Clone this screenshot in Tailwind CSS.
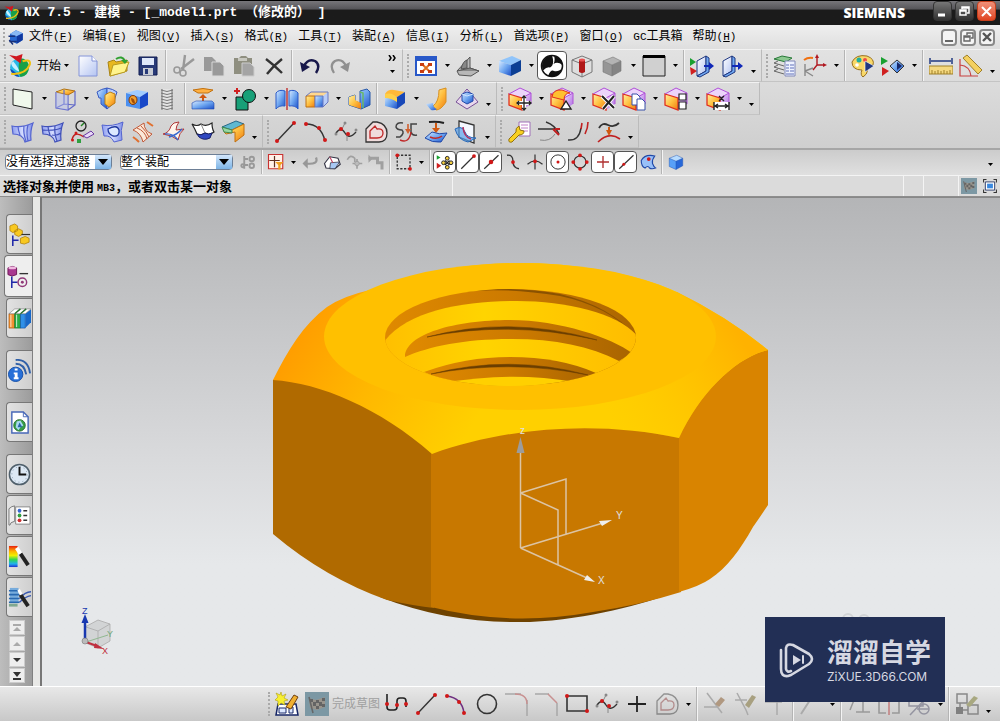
<!DOCTYPE html>
<html lang="zh-CN">
<head>
  <meta charset="UTF-8" />
  <meta name="viewport" content="width=device-width, initial-scale=1.0"/>
  <title>NX 7.5 - 建模</title>
  <script src="https://cdn.jsdelivr.net/npm/@tailwindcss/browser@4"></script>
</head>
<body class="h-screen flex flex-col overflow-hidden bg-[#dcdcdc] text-black text-xs font-['Liberation_Sans','Noto_Sans_CJK_SC',sans-serif]">

  <!-- shared gradients -->
  <svg width="0" height="0" class="absolute" aria-hidden="true">
    <defs>
      <linearGradient id="gb" x1="0" y1="0" x2="1" y2="1"><stop offset="0" stop-color="#d8eaff"/><stop offset=".5" stop-color="#6ea6f0"/><stop offset="1" stop-color="#1c50c8"/></linearGradient>
      <linearGradient id="gl" x1="0" y1="0" x2="1" y2="1"><stop offset="0" stop-color="#fff"/><stop offset="1" stop-color="#b4c4f2"/></linearGradient>
      <linearGradient id="gs" x1="0" y1="0" x2="1" y2="0"><stop offset="0" stop-color="#8c9cf0"/><stop offset=".5" stop-color="#d4dcff"/><stop offset="1" stop-color="#7c8ce8"/></linearGradient>
      <linearGradient id="go" x1="0" y1="0" x2="1" y2="1"><stop offset="0" stop-color="#fff0a0"/><stop offset=".5" stop-color="#ffc040"/><stop offset="1" stop-color="#ee7a10"/></linearGradient>
      <linearGradient id="gp" x1="0" y1="0" x2="1" y2="1"><stop offset="0" stop-color="#f4dcff"/><stop offset="1" stop-color="#a868e0"/></linearGradient>
      <linearGradient id="gr" x1="0" y1="0" x2="0" y2="1"><stop offset="0" stop-color="#e82010"/><stop offset=".25" stop-color="#ffb000"/><stop offset=".45" stop-color="#f0f000"/><stop offset=".65" stop-color="#30d850"/><stop offset=".85" stop-color="#20b0f0"/><stop offset="1" stop-color="#2030d0"/></linearGradient>
    </defs>
  </svg>

  <header class="h-[25px] shrink-0 flex items-center pl-1 pr-1 border-t border-black bg-linear-to-b from-[#77767a] from-0% via-[#555458] via-35% to-[#1b1b1b] to-36% text-white">
    <span data-icon="nx" data-size="16"></span>
    <h1 class="ml-1 text-[13px] font-bold whitespace-pre font-['Liberation_Mono','Noto_Sans_CJK_SC',monospace]">NX 7.5 - 建模 - [_model1.prt （修改的） ]</h1>
    <span class="ml-auto mr-7 text-sm font-extrabold font-['Open_Sans',sans-serif]">SIEMENS</span>
    <div class="flex gap-[3px] self-start">
      <button aria-label="最小化" class="w-[19px] h-5 rounded-sm border border-[#333] bg-linear-to-b from-[#777] to-[#333] flex items-center justify-center"><svg width="13" height="13" viewBox="0 0 13 13"><path d="M2 10h7" stroke="#fff" stroke-width="3"/></svg></button>
      <button aria-label="还原" class="w-[19px] h-5 rounded-sm border border-[#333] bg-linear-to-b from-[#777] to-[#333] flex items-center justify-center"><svg width="13" height="13" viewBox="0 0 13 13" fill="none" stroke="#fff" stroke-width="1.5"><path d="M4 4V2h7v6H9M2 5h6v5H2zM2 6h6M4 3h7"/></svg></button>
      <button aria-label="关闭" class="w-[19px] h-5 rounded-sm border border-[#c8401c] bg-linear-to-b from-[#f09078] to-[#e04420] flex items-center justify-center"><svg width="13" height="13" viewBox="0 0 13 13"><path d="m2 2 9 9M11 2l-9 9" stroke="#fff" stroke-width="2"/></svg></button>
    </div>
  </header>

  <nav class="h-6 shrink-0 flex items-center pl-[3px] pr-[5px] bg-linear-to-b from-[#efefef] to-[#dedede]">
    <span class="w-1 h-[18px] border-l-2 border-dotted border-[#aaa]"></span>
    <span data-icon="menuCube" data-size="18"></span>
    <div id="menu" class="ml-1 flex gap-[10px]"></div>
    <div class="ml-auto flex gap-[3px]">
      <button aria-label="最小化文档" class="w-4 h-[17px] rounded-sm border-2 border-[#8a8a8a] bg-[#f4f4f4] flex items-end justify-center pb-[2px]"><span class="w-2 h-[2px] bg-[#666]"></span></button>
      <button aria-label="还原文档" class="w-4 h-[17px] rounded-sm border-2 border-[#8a8a8a] bg-[#f4f4f4] flex items-center justify-center"><svg width="11" height="11" viewBox="0 0 11 11" fill="none" stroke="#666" stroke-width="1.4"><path d="M4 3V1h6v5H8M1 4h6v5H1zM1 5h6"/></svg></button>
      <button aria-label="关闭文档" class="w-4 h-[17px] rounded-sm border-2 border-[#8a8a8a] bg-[#f4f4f4] flex items-center justify-center"><svg width="10" height="10" viewBox="0 0 10 10"><path d="m1 1 8 8M9 1 1 9" stroke="#555" stroke-width="2.4"/></svg></button>
    </div>
  </nav>

  <div class="shrink-0 bg-linear-to-b from-[#e2e2e2] to-[#cfcfcf] border-b-2 border-[#a6a6a6]">
    <div id="row1" class="h-[33px] flex"></div>
    <div id="row2" class="h-[33px] flex"></div>
    <div id="row3" class="h-[33px] flex"></div>
  </div>

  <div class="h-[26px] shrink-0 flex items-center pl-[5px] pr-1 pb-px bg-linear-to-b from-[#cccccc] to-[#e0e0e0] border-b border-[#f4f4f4]">
    <label class="relative w-[107px]">
      <select aria-label="选择过滤器" class="block w-full h-4 appearance-none rounded-sm border border-[#6d7f96] bg-white text-xs leading-[14px] outline-none"><option>没有选择过滤器</option></select>
      <span class="absolute right-px top-px w-4 h-[14px] bg-linear-to-b from-[#d2e6fb] to-[#7cb4e6] flex items-center justify-center pointer-events-none"><svg width="10" height="6"><path d="M0 0h10L5 6z"/></svg></span>
    </label>
    <label class="relative w-[113px] ml-2">
      <select aria-label="选择范围" class="block w-full h-4 appearance-none rounded-sm border border-[#6d7f96] bg-white text-xs leading-[14px] outline-none"><option>整个装配</option></select>
      <span class="absolute right-px top-px w-4 h-[14px] bg-linear-to-b from-[#d2e6fb] to-[#7cb4e6] flex items-center justify-center pointer-events-none"><svg width="10" height="6"><path d="M0 0h10L5 6z"/></svg></span>
    </label>
    <div id="row4" class="ml-1 h-6 flex flex-1"></div>
  </div>

  <div class="h-[21px] shrink-0 flex items-center border-b border-[#8e8e8e] bg-[#dbdbdb]">
    <p class="w-[452px] pl-[3px] text-[13px] leading-none font-bold whitespace-pre font-['Noto_Sans_CJK_SC',sans-serif]">选择对象并使用 <span class="text-[10px] font-['Liberation_Mono',monospace]">MB3</span>，或者双击某一对象</p>
    <span class="flex-1 h-full border-x border-[#f4f4f4]"></span>
    <span class="w-5 h-full border-r border-[#f4f4f4]"></span>
    <span class="w-[35px] h-full border-r border-[#f4f4f4]"></span>
    <span class="w-5 flex justify-center" data-icon="flag" data-size="16"></span>
    <span class="w-[21px] flex justify-center" data-icon="fullscreen" data-size="14"></span>
  </div>

  <main class="flex-1 min-h-0 flex">
    <aside class="w-8 shrink-0 flex flex-col items-end pt-[17px] bg-linear-to-r from-[#bdbdbd] to-[#9c9c9c]">
      <div id="tabs" class="w-full flex flex-col items-end"></div>
      <div id="scrollers" class="mt-[2px] mr-[7px] flex flex-col"></div>
    </aside>
    <div class="w-[10px] shrink-0 border-l border-r-2 border-l-[#808080] border-r-[#777] bg-[#e8e8e6]"></div>
    <section class="relative flex-1 min-w-0 border-t border-[#888] bg-linear-to-b from-[#b4b5b7] from-0% via-[#d8d9db] via-52% to-[#e6e8ea] to-75%">
      <svg class="block w-full h-full" viewBox="42 198 958 488">
        <defs>
          <linearGradient id="chamfer" gradientUnits="userSpaceOnUse" x1="285" y1="320" x2="470" y2="430"><stop offset="0" stop-color="#ff9800"/><stop offset=".5" stop-color="#ffb800"/><stop offset="1" stop-color="#ffd000"/></linearGradient>
          <linearGradient id="chamferR" gradientUnits="userSpaceOnUse" x1="600" y1="400" x2="730" y2="320"><stop offset="0" stop-color="#ffc400" stop-opacity="0"/><stop offset="1" stop-color="#ffb200"/></linearGradient>
          <linearGradient id="wall" x1="0" y1="0" x2="1" y2="0"><stop offset="0" stop-color="#e08a00"/><stop offset=".5" stop-color="#cc7a00"/><stop offset="1" stop-color="#a86400"/></linearGradient>
          <linearGradient id="lit" x1="0" y1="0" x2="1" y2="0"><stop offset="0" stop-color="#ffbe00"/><stop offset=".4" stop-color="#ffd400"/><stop offset="1" stop-color="#ffbc00"/></linearGradient>
          <clipPath id="hole"><ellipse cx="510.500" cy="337.500" rx="125.500" ry="48.500"/></clipPath>
        </defs>
        <!-- underside and side faces -->
        <path d="M380 597C430 617 480 623 530 622C590 619 640 605 682 590L660 570H400z" fill="#6e4200"/>
        <path d="M273 380C340 370 440 420 434 454V608Q415 606 387 600Q325 578 273 534z" fill="#b06a00"/>
        <path d="M431 450L560 410L681 437V592Q640 605 593 612Q510 627 431 607z" fill="#c87800"/>
        <path d="M679 436L700 380L740 345L768 350V505Q760 517 753 527C740 550 727 568 710 579Q700 586 679 592z" fill="#d98400"/>
        <!-- chamfer -->
        <path d="M273 380C288 350 303 325 327 307Q343 296 370 290C415 274 465 263 520 263C575 263 635 273 677 292Q728 317 768 350C735 358 700 393 679 438C600 421 510 426 432 454C380 408 320 383 273 380z" fill="url(#chamfer)"/>
        <path d="M540 410L660 290L677 292Q728 317 768 350C735 358 700 393 679 438Q610 423 540 429z" fill="url(#chamferR)"/>
        <ellipse cx="520" cy="336.500" rx="196" ry="73.500" fill="#ffc000"/>
        <!-- threaded hole -->
        <g clip-path="url(#hole)">
          <rect x="380" y="285" width="262" height="105" fill="url(#wall)"/>
          <path d="M460 292Q510 285 560 294Q610 306 636 336Q608 306 560 296Q505 287 460 292z" fill="#8a5200"/>
          <path d="M380 348C400 312 460 301 517 301C570 301 625 315 640 340V395H380z" fill="url(#lit)"/>
          <path d="M405 357C405 334 455 320 510 320C560 320 612 338 632 353L619 361C590 346 555 339 512 339C465 339 430 346 405 357z" fill="url(#wall)"/>
          <path d="M427 337Q510 315 597 340Q510 320 427 337z" fill="#6b3f00" stroke="#6b3f00" stroke-width=".5"/>
          <path d="M424 372Q465 357 510 357Q560 357 596 373L568 384H453z" fill="url(#wall)"/>
          <path d="M431 374Q510 354 588 375Q510 359 431 374z" fill="#6b3f00" stroke="#6b3f00" stroke-width=".5"/>
          <path d="M445 383Q510 371 575 382V392H445z" fill="#ffd000"/>
        </g>
        <!-- datum csys -->
        <g fill="none" stroke="#dcc4a4" stroke-width="1.500">
          <path d="M520.500 548V450M520.500 548L603 523M520.500 548L587 578M520.500 493L566 479V535M520.500 493L558 510V565"/>
        </g>
        <path d="M520.500 437l4 16h-8z" fill="#9c9c9c"/>
        <path d="M612 520l-13 1 3 5z M595 582l-8-7-3 5z" fill="#eee"/>
        <g fill="#e0e0e0" font-family="Liberation Sans" font-size="10"><text x="520" y="434">z</text><text x="616" y="519">Y</text><text x="598" y="584">X</text></g>
        <!-- view triad -->
        <path d="M85 627L98 620L110 624V641L98 648L86 643zM86 627L98 631V648M98 631L110 624" fill="#c4c6c6" fill-opacity=".6" stroke="#aaa" stroke-width=".8"/>
        <path d="M85 642V622" stroke="#1838b0" stroke-width="2.500"/><path d="M85 614l3.500 9h-7z" fill="#1838b0"/>
        <path d="M86 642L108 635" stroke="#90b890"/><path d="M86 642L97 646" stroke="#c03040" stroke-width="2"/><path d="M104 649l-9-6-1 5z" fill="#c03040"/>
        <circle cx="85" cy="641" r="3" fill="#bbb" stroke="#777" stroke-width=".6"/>
        <g font-family="Liberation Sans" font-size="9"><text x="82" y="614" fill="#1838b0">Z</text><text x="107" y="637" fill="#70a878">Y</text><text x="102" y="654" fill="#c03040">X</text></g>
        <g fill="none" stroke="#d2d4d6" stroke-width="2"><circle cx="848" cy="619" r="5"/><circle cx="864" cy="620" r="5"/></g>
      </svg>
      <div class="absolute right-[55px] -bottom-4 w-[180px] h-[85px] bg-[#222f55] text-[#d6d8e2] flex items-center gap-3 pl-[14px]">
        <svg width="36" height="38" viewBox="0 0 36 38" fill="none" stroke="currentColor" stroke-width="2.600" stroke-linecap="round" stroke-linejoin="round">
          <path d="M2 9v19q0 8 7 7l3-1M12 30q-4 2-5-2V7q1-5 7-3l16 9q6 5 0 10l-18 11"/><path d="m14 14 8 5-8 5z" fill="currentColor" stroke="none"/><path d="M24 15v7" stroke-width="2"/>
        </svg>
        <div class="flex flex-col gap-[6px]">
          <p class="text-[26px] leading-7 font-bold font-['Noto_Sans_CJK_SC',sans-serif]">溜溜自学</p>
          <p class="text-xs leading-3 font-['Inter',sans-serif]">ZiXUE.3D66.COM</p>
        </div>
      </div>
    </section>
  </main>

  <footer id="bottom" class="h-[35px] shrink-0 flex pl-[264px] border-t border-white bg-linear-to-b from-[#e8e8e8] to-[#c8c8c8]"></footer>

  <script>
    const cube = (top, left, right, line = '#1c50b0') =>
      `<path d="M3 7 13 3l8 4-9 4z" fill="${top}"/><path d="M3 7v11l9 4V11z" fill="${left}"/><path d="M12 11v11l9-5V7z" fill="${right}"/><path d="M3 7 13 3l8 4v10l-9 5-9-4zM3 7l9 4 9-4M12 11v11" fill="none" stroke="${line}" stroke-width=".6"/>`;
    const sync = `<path d="M1 7 12 1l11 5-9 5z" fill="#ecd4fa"/><path d="M14 11l9-5v11l-9 6z" fill="url(#gp)"/><path d="M1 7l13 4v12L1 18z" fill="url(#go)" stroke="#e03020" stroke-width="1.300"/><path d="M1 7 12 1l11 5v11M14 11l9-5" fill="none" stroke="#b050d8"/>`;
    const dot = (x, y, r = 2) => `<circle cx="${x}" cy="${y}" r="${r}" fill="#d01818"/>`;
    const line = (d, c = '#222', w = 1.5) => `<path d="${d}" fill="none" stroke="${c}" stroke-width="${w}"/>`;

    const icons = {
      nx: `<circle cx="11" cy="14" r="9" fill="#28b8e8"/><path d="M11 5q9 0 9 9 0 8-8 9-3-4-1-18z" fill="#18a048"/><path d="M2 15q6 3 9 8-7-1-9-8z" fill="#1048b8"/><path d="M5 8q5 6 6 10Q4 15 3 10z" fill="#c8f0ff"/>${line('M3 20q14 1 18-9c1-5-4-4-7-3', '#f0c010', 2)}<path d="M1 2l7 1 6-2-2 9z" fill="#d01820"/>`,
      menuCube: `<path d="M4 8 12 3l9 4v9l-8 5-9-4z" fill="#2868d0"/><path d="M4 8l9 3 8-4-9-4z" fill="#88b8f4"/><path d="M13 11v10l8-5V7z" fill="#1038a0"/><path d="M2 11h9M3 16l5 6M3 18h10" stroke="#183078" stroke-width="2"/>`,
      new: `<path d="M3 2h13l5 5v15H3z" fill="url(#gl)" stroke="#8494d8"/><path d="M16 2v5h5" fill="#fff" stroke="#8494d8"/>`,
      open: `<path d="M2 8l6-2 2 2 11-2v11L4 22z" fill="#e8b820" stroke="#a88418"/><path d="M4 22 7 11l16-3-4 10z" fill="#fff48c" stroke="#b89a20"/>${line('M10 5q6-4 9 2', '#30a030', 2)}<path d="M15 6h7l-3 4z" fill="#30a030"/>`,
      save: `<path d="M3 3h18v18H3z" fill="#283a78" stroke="#101c50"/><path d="M6 4h12v7H6z" fill="#dfe8fa"/><path d="M7 14h10v7H7z" fill="#c8ccd4"/><path d="M9 15h3v5H9z" fill="#283a78"/>`,
      cut: `${line('M22 5 9 15M13 1 11 16', '#999', 2.4)}<circle cx="5" cy="16" r="3" fill="none" stroke="#999" stroke-width="1.600"/><circle cx="11" cy="19" r="3" fill="none" stroke="#999" stroke-width="1.600"/>`,
      copy: `<path d="M2 3h8l4 4v10H2z" fill="#999"/><path d="M10 8h8l4 4v10H10z" fill="#999" stroke="#d8d8d8"/>`,
      paste: `<path d="M2 4h5l2-2h5l2 2h4v16H2z" fill="#8f8f80"/><path d="M6 4h9v3H6z" fill="#c8c8c0"/><path d="M10 9h8l4 4v9H10z" fill="#a4a4a4" stroke="#ccc"/>`,
      del: line('M4 5q8 6 16 14M20 5Q11 12 5 20', '#333', 2.4),
      undo: `${line('M6 12q4-8 11-5 6 4 1 12', '#18184a', 2.4)}<path d="M2 8l2 10 8-5z" fill="#18184a"/>`,
      redo: `${line('M18 12q-4-8-11-5-6 4-1 12', '#909090', 2.2)}<path d="M22 8l-2 10-8-5z" fill="#909090"/>`,
      fit: `<path d="M2 3h20v18H2z" fill="#fff" stroke="#2858c8" stroke-width="2"/><path d="M2 3h20v4H2z" fill="#2858c8"/>${line('M8 10l8 8M16 10l-8 8', '#e07020', 2)}<path d="M6 9h4v3H6zM14 9h4v3h-4zM6 16h4v3H6zM14 16h4v3h-4z" fill="#c83c10"/>`,
      section: `<path d="M1 17 14 3v11l9 3-8 5-12-1z" fill="#b8b8b8" stroke="#555"/><path d="M1 17l13-3 9 3M5 15q2-8 6-9v8z" fill="#888" stroke="#555"/>`,
      shaded: `<path d="M1 7l13-5 9 4-10 5z" fill="#90c4fa"/><path d="M1 7v11l12 4V11z" fill="url(#gb)"/><path d="M13 11v11l10-5V6z" fill="#0c3f94"/>`,
      zebra: `<circle cx="12" cy="12" r="10.500" fill="#fff"/><path d="M12 1.500a10.500 10.500 0 0 0-9 15q4-4 7-3 5-3 2-12z" fill="#111"/><path d="M14 2q9 2 8.500 9-5-4-9-1 2-4 .5-8zM22 14a10.500 10.500 0 0 1-14 8q3-7 6-5 5 1 8-3z" fill="#111"/><circle cx="12" cy="12" r="10.500" fill="none" stroke="#111" stroke-width="1.500"/>`,
      cyl: `${line('M2 6l10-4 10 4v12l-10 5-10-5zM2 6l10 4 10-4M12 10v13', '#777', 1)}<path d="M9 6h6v12q-3 2-6 0z" fill="#b01818"/><ellipse cx="12" cy="6" rx="3" ry="1.500" fill="#e85050"/>`,
      grayCube: cube('#b4b4b4', '#969696', '#848484', '#777'),
      back: `<path d="M1 2h22v20H1z" fill="#d0d0d0" stroke="#222"/><path d="M1 1h22v3H1z"/>`,
      show: `<path d="M0 4l6 4-6 4z" fill="#18a030"/><path d="M0 13l7 4-6 4z" fill="#d02020"/><path d="M7 7l9-5v15l-9 5z" fill="url(#gl)" stroke="#203880"/><path d="M16 2l3 2v14l-9 5-3-1 9-5z" fill="#6ea6f0" stroke="#203880"/>${line('M14 12h6', '#1028b8', 2)}<path d="M19 8l5 4-5 4z" fill="#1028b8"/>`,
      hide: `<path d="M3 7l9-5v15l-9 5z" fill="url(#gl)" stroke="#203880"/><path d="M12 2l3 2v14l-9 5-3-1 9-5z" fill="#6ea6f0" stroke="#203880"/>${line('M12 12h6', '#1028b8', 2)}<path d="M18 8l5 4-5 4z" fill="#1028b8"/>`,
      layers: `<path d="M1 5l8-3 10 2-6 4z" fill="#8cc890" stroke="#287838"/><path d="M1 9l10 3M1 9l4-2M1 13l10 3M1 13l4-2M1 17l10 3M1 17l4-2" fill="none" stroke="#666"/><path d="M12 7h10v15H12z" fill="#eef2ff" stroke="#8088b8"/>${line('M13 11h3M17 11h4M13 14h3M17 14h4M13 17h3M17 17h4M13 20h8', '#6070b8', 1)}`,
      wcs: `${line('M14 2v9M14 11h8M14 11l-4 5', '#b01820', 1.4)}${line('M2 10v12M2 17l8-3M2 17l8 5', '#888', 1.4)}<path d="M12 4l2-4 2 4zM20 9l4 2-4 2z" fill="#b01820"/>${line('M1 6q4-3 9-2', '#f07010', 2)}`,
      palette: `<path d="M1 8q4-8 15-6 8 3 6 9-5 0-5 4-1 6-5 8-3-2-1-7-10 0-10-8z" fill="#f8d868" stroke="#987020"/><circle cx="8" cy="6" r="2.500" fill="#20b0a0"/><circle cx="14" cy="6" r="2" fill="#f04848"/><circle cx="6" cy="11" r="1.800" fill="#fff"/><path d="M14 7l9 5-9 6z" fill="#203880" stroke="#fff" stroke-width=".6"/>`,
      swap: `<path d="M0 3l7 4-7 4z" fill="#18a030"/><path d="M1 13l7 4-7 5z" fill="#d02020"/><path d="M9 12l7-6 7 6-7 7z" fill="url(#gb)" stroke="#333"/><path d="M16 8v8l5-4z" fill="#182868"/>`,
      ruler: `${line('M1 4v6M23 4v6M2 7h20', '#203880', 1.5)}<path d="M0 12h24v8H0z" fill="#f4d880" stroke="#a08028"/>${line('M3 16v4M6 17v3M9 16v4M12 17v3M15 16v4M18 17v3M21 16v4', '#a08028', 1)}`,
      angle: `<path d="M4 4l4-3 15 15-4 4z" fill="#f4d060" stroke="#a08028"/>${line('M1 5v17h18M1 11q10 1 11 11', '#c84040', 1.2)}`,

      plane: `<path d="M2 2l19 3v17L2 18z" fill="#f0f8ec" stroke="#222"/>`,
      extrude: `<path d="M3 5l8-3 11 2-7 4z" fill="url(#go)" stroke="#b07010"/>${line('M3 5v16l12 2V8M22 4v14l-7 5M11 3v14M3 21l8-4 11 1', '#6068c8', 1.2)}<path d="M3 5l12 3v15L3 21z" fill="#b0b8f0" fill-opacity=".4"/>`,
      revolve: `<path d="M2 5q4-3 10-4v21l-6-5v-6H4z" fill="url(#gb)" stroke="#3858c0"/><path d="M12 1q6 1 10 4l-2 6-1 5-7 6z" fill="#b8ccf8" stroke="#3858c0"/><path d="M10 8l5-3 5 2v9l-6 4-4-3z" fill="url(#go)" stroke="#c08010"/>`,
      hole: `<path d="M1 6 12 3l11 2-8 5z" fill="#a0ccff"/><path d="M1 6l14 4v12L1 19z" fill="#4c90f0"/><path d="M15 10l8-5v13l-8 4z" fill="#1848c8"/><ellipse cx="8" cy="13" rx="4" ry="4.500" fill="#f0a030" stroke="#803808"/><path d="M6 11q4 0 4 6-4-1-4-6z" fill="#a04c08"/>`,
      thread: `<path d="M7 2h10v21H7z" fill="#e4e4e4"/>${line('M6 3q6 3 12 0M6 6q6 3 12 0M6 9q6 3 12 0M6 12q6 3 12 0M6 15q6 3 12 0M6 18q6 3 12 0M6 21q6 3 12 0M7 2v21M17 2v21', '#777', 1)}`,
      boss: `<path d="M2 3q10-3 20 0l-5 3H7z" fill="#ffb040" stroke="#c07010"/>${line('M12 16V9', '#d05810', 2)}<path d="M8 11l4-4 4 4z" fill="#d05810"/><path d="M1 16l4-2h16l2 2v6H1z" fill="url(#gb)" stroke="#2048b0" stroke-width=".6"/>`,
      unite: `<path d="M3 10h12v13H3z" fill="#18a078" stroke="#111"/><circle cx="16" cy="9" r="6.500" fill="#18a078" stroke="#111"/>${line('M1 4h6M4 1v6', '#d02020', 2)}`,
      mirror: `<path d="M1 6q3-4 9-2v15q-6-1-9 3z" fill="url(#gb)" stroke="#2858c8"/><path d="M23 6q-3-4-9-2v15q6-1 9 3z" fill="url(#gb)" stroke="#2858c8"/>${line('M12 1v22', '#c03030', 1.4)}`,
      split: `<path d="M1 9l5-4h17l-5 4z" fill="#ffd890"/><path d="M1 9h9v11H1z" fill="url(#go)" stroke="#c07010"/><path d="M10 9h8v11h-8z" fill="url(#gb)"/><path d="M18 9l5-4v10l-5 5z" fill="#b8ccf8"/>${line('M10 9h8v11h-8zM1 9l5-4h17v10l-5 5', '#6878c0', 1)}`,
      trim: `<path d="M2 10l6-2v6l5 2V4l7-2 3 3v13l-9 4-12-4z" fill="url(#gb)" stroke="#2858a8"/><path d="M2 10l6-2v5l6 3v6L2 18z" fill="url(#go)"/><path d="M13 5l3 1v15" fill="none" stroke="#68b868" stroke-width="1.500"/>`,
      blend: `<path d="M2 7q3-5 9-4l11 2-8 5z" fill="#ffb838"/><path d="M2 7l12 3v12L2 19z" fill="url(#gb)"/><path d="M2 7q8-2 12 4v4q-6-4-12-4z" fill="#ffd048"/><path d="M14 10l8-5v11l-8 6z" fill="#1848b8"/>`,
      sheet: `<path d="M14 3l7-2v14q-5 8-10 8l-3-4q6-4 6-16z" fill="url(#go)" stroke="#d89020"/><path d="M1 17l7-1q0 5 4 6-3 2-6 1z" fill="url(#gb)"/>`,
      draft: `<path d="M12 2 23 15 12 22 1 15z" fill="#e8d8ec" stroke="#785098"/><path d="M7 7l5-2 6 2v7l-6 3-5-3z" fill="url(#gb)" stroke="#2048a8"/><path d="M7 7l5 2 6-2" fill="none" stroke="#d0e4ff"/>`,
      s1: `${sync}${line('M16 9v14M9 16h14', '#fff', 4)}${line('M16 9v14M9 16h14M14 11l2-2 2 2M14 21l2 2 2-2M11 14l-2 2 2 2M21 14l2 2-2 2', '#222', 1.3)}`,
      s2: `${sync}<path d="M2 10q1-8 10-7l8 3q-6 0-6 7z" fill="#ffc030" stroke="#e03020"/><path d="M16 14l5 8H11z" fill="#fff" stroke="#222" stroke-width="1.400"/>`,
      s3: `${sync}${line('M10 9l12 12M22 9 11 22', '#fff', 4)}${line('M10 9l12 12M22 9 11 22', '#222', 2)}`,
      s4: `${sync}<path d="M10 7h5l3 3v8h-8z" fill="#fff" stroke="#3850a8"/><path d="M15 12h5l3 3v8h-8z" fill="#fff" stroke="#3850a8"/>`,
      s5: `${sync}<path d="M15 7h7v6h-7zM15 15h7v7h-7z" fill="#fff" stroke="#222" stroke-width="1.200"/>`,
      s6: `${sync}<path d="M8 15h15v8H8z" fill="#fff"/>${line('M8 15v8M23 15v8M9 19h13M12 17l-3 2 3 2M19 17l3 2-3 2M13 9l5 5M18 9l-5 5', '#222', 1.4)}`,

      surf1: `<path d="M1 6q10 2 21-3-3 8-2 17l-6 2Q12 14 2 14z" fill="url(#gs)"/>${line('M1 6q10 2 21-3-3 8-2 17l-6 2Q12 14 2 14zM7 6q0 4 2 9M13 6q-1 7 2 15M17 5q-2 7 0 16', '#5464d0', 1.2)}`,
      surf2: `<path d="M1 6q10 2 21-3-3 8-2 17l-6 2Q12 14 2 14z" fill="url(#gs)"/>${line('M1 6q10 2 21-3-3 8-2 17l-6 2Q12 14 2 14zM7 6q0 4 2 9M14 6q-1 7 2 15M2 10q12 1 18-2M11 15q5 1 9-2', '#4050b8', 1.2)}`,
      surf3: `<circle cx="10" cy="6" r="5" fill="none" stroke="#222" stroke-width="1.300"/>${line('M10 6l3-3', '#208020')}${line('M1 20q2-10 12-3', '#c02020', 1.4)}${dot(1.5, 20, 1.5)}${dot(5, 13, 1.5)}<path d="M12 16l8-5 3 3-7 4z" fill="#e8d8f8" stroke="#6838a0"/><path d="M6 19h4v4H6z" fill="#30a040"/>`,
      surf4: `<path d="M1 5q10 2 21-3-3 8-1 18l-8 2Q10 15 3 16z" fill="url(#gs)" stroke="#5464d0"/><path d="M7 9q9-5 11 1 1 7-6 6-5-2-5-7z" fill="#dce8ff" stroke="#2038a0" stroke-width="1.300"/>`,
      surf5: `<path d="M2 10l11-7q0 8 8 11l-9 8Q10 13 2 10z" fill="#fbe8d8" stroke="#c05838"/>${line('M6 8q8 3 10 11M10 6q6 6 8 11', '#c05838', 1)}${line('M2 17q3 2 6 5M16 2l6 4', '#e07030', 2)}`,
      surf6: `<path d="M2 14q6-1 8-8 2-4 8-4-3 4-3 8l8-1q-5 4-6 11-6-5-15-6z" fill="#fff4ec" stroke="#b03838"/><path d="M4 14q8-1 13 6M8 17q8-2 13-8" fill="none" stroke="#3868d0" stroke-width="1.400"/>`,
      surf7: `<path d="M1 4q5 3 9 0 5 3 11-1 0 6 2 9-5 4-9 1-4 3-8 1-2-5-5-10z" fill="#fff" stroke="#222" stroke-width="1.200"/><path d="M6 14q4 2 8-1 4 2 7 0l-2 5q-6 3-11-1z" fill="#3048c0" stroke="#182068"/>${line('M10 4l4 9', '#888', 1)}`,
      surf8: `<path d="M1 7 15 1l8 3-12 6z" fill="#60b8d0" stroke="#286888"/><path d="M3 12l8-2 12-6v11l-9 7V12l-9 2z" fill="url(#go)" stroke="#c07010"/><path d="M1 7l10 3v3L3 12z" fill="#98d8a0" stroke="#408850"/>`,
      line: `${line('M3 21 20 3', '#333', 1.4)}${dot(3, 21)}${dot(20, 3)}`,
      arc: `${line('M2 4q15 0 19 17', '#333', 1.4)}${dot(2, 4)}${dot(15, 8)}${dot(21, 20)}`,
      spline: `${line('M2 13q5-7 9 0t11-1', '#333', 1.4)}${line('M8 9 11 3M13 14v7', '#888', 1)}${dot(7, 9)}${dot(14, 14)}<circle cx="11" cy="3" r="1.500" fill="#888"/><circle cx="2" cy="14" r="1.500" fill="#888"/><circle cx="22" cy="10" r="1.500" fill="#888"/>`,
      offset: `<path d="M2 9l7-7h4q10 2 10 11 0 9-8 9H2z" fill="#f0dcdc" stroke="#333" stroke-width="1.300"/><path d="M6 11l5-5 2 3q6-1 6 4 0 5-6 5H6z" fill="none" stroke="#c02828" stroke-width="1.300"/>`,
      bridge: `${line('M9 3q-7-1-7 4 1 3 6 3 3 3-2 7H2M23 4h-6v8q1 4 6 3', '#444', 1.5)}<path d="M11 9l3 5 3-5z" fill="#d06030"/>${line('M14 4v6', '#d06030', 1.6)}${line('M6 20q9 4 11-8', '#c02828', 1.5)}`,
      project: `${line('M5 2q8-1 15 1', '#222', 2)}${line('M12 3v8', '#d05810', 2)}<path d="M8 8l4 5 4-5z" fill="#d05810"/><path d="M1 18l7-6q7 3 15 1l-6 9q-9 1-16-4z" fill="url(#gb)" stroke="#2048a8"/>${line('M6 17q7 3 12-1', '#c02828', 1.6)}`,
      intersect: `<path d="M5 1l15 4v18L5 17z" fill="#f4f8ff" stroke="#333" stroke-width="1.300"/><path d="M1 9q7-4 10 3 2 6 11 6l-8 4Q4 20 1 9z" fill="#58a0e8" fill-opacity=".7" stroke="#2868b8"/>${line('M9 7q1 10 8 12', '#b03060', 1.6)}`,
      wrench: `<path d="M12 2h11v14H12z" fill="#fff" stroke="#a070b8"/>${line('M14 5h7M14 8h7M14 11h7', '#c080c8', 1)}<path d="M2 19l7-7q-1-4 3-6l1 4 4 1q0 4-5 4l-7 7q-4 1-3-3z" fill="#f8d020" stroke="#907010"/>`,
      trimC: `${line('M1 9h21M9 2q9 3 13 12', '#333', 1.4)}${line('M16 9l6 6M18 9h5', '#c02020', 2)}${line('M3 20q10 2 15-6', '#888', 1)}`,
      trimD: `${line('M1 20q11 1 13-12', '#333', 1.5)}${line('M14 9l1-6M18 14q3-6 3-12', '#c02020', 1.6)}`,
      trimE: `${line('M2 8q3-6 9-3t11-2', '#333', 1.8)}${line('M1 22q11-11 22-3', '#c02020', 1.6)}<path d="M9 10l3 6 3-6z" fill="#d05810"/>${line('M12 7v5', '#d05810', 2)}`,

      find: `<g fill="none" stroke="#999" stroke-width="2.500"><path d="M7 4v17M7 8h5M7 16h5"/><circle cx="5" cy="17" r="2"/><circle cx="17" cy="8" r="3"/><circle cx="17" cy="17" r="3"/></g>`,
      snapBox: `<path d="M2 2h19v19H2z" fill="#fff0e8" stroke="#c83030" stroke-width="1.500"/>${line('M10 4v15M3 10h14', '#603020', 1.6)}<path d="M11 12h11l-4 4v6h-3v-6z" fill="#f0a020"/>`,
      ret: `${line('M20 6q4 10-14 8', '#989898', 3)}<path d="M9 7v14l-7-7z" fill="#989898"/>`,
      body: `<path d="M2 14 9 5l11 2 3 8-7 6-12-1z" fill="#fff" stroke="#334" stroke-width="1.500"/><path d="M10 13l12-1-6 9H9z" fill="#a8c8f4" stroke="#334"/>${line('M9 5l4 8', '#c04060')}`,
      rot: `${line('M3 9q4-8 10-2v5M10 14h13M16 8v13', '#a0a0a0', 2.2)}<circle cx="16" cy="14" r="3" fill="#bbb" stroke="#999"/>`,
      turn: `${line('M2 7h12v6h6v9', '#a0a0a0', 4)}<path d="M2 2v11l5-5z" fill="#a0a0a0"/>`,
      rect: `<path d="M3 3h17v18H3z" fill="none" stroke="#333" stroke-width="1.800" stroke-dasharray="3 2"/>${dot(3, 3, 2.5)}${dot(20, 21, 2.5)}`,
      snapAll: `<path d="M1 3l5 3-5 3z" fill="#18a030"/><path d="M1 13l6 4-6 4z" fill="#d02020"/><g fill="#f8d040" stroke="#222" stroke-width="1.300"><circle cx="15" cy="7" r="2.500"/><circle cx="10" cy="13" r="2.500"/><circle cx="20" cy="13" r="2.500"/><circle cx="15" cy="19" r="2.500"/></g>${line('M12 10l6 6M18 10l-6 6', '#222', 1.5)}`,
      snapEnd: `${line('M3 21 20 4', '#333', 1.6)}${dot(20, 4, 2.5)}`,
      snapMid: `${line('M3 21 22 3', '#333', 1.6)}${dot(12, 12, 3)}`,
      snapCtl: `${line('M4 3q8-1 8 8t8 10', '#333', 1.8)}${dot(12, 12, 2.5)}`,
      snapInt: `${line('M12 2v20M2 15q10-9 20 0', '#333', 1.6)}${dot(12, 11, 2.5)}`,
      snapCen: `<circle cx="12" cy="12" r="9.500" fill="none" stroke="#333" stroke-width="1.300"/>${dot(12, 12, 2)}`,
      snapQuad: `<circle cx="12" cy="12" r="8" fill="none" stroke="#333" stroke-width="1.500"/>${dot(12, 3, 2.5)}${dot(12, 21, 2.5)}${dot(3, 12, 2.5)}${dot(21, 12, 2.5)}`,
      snapPt: line('M12 4v16M4 12h16', '#b03030', 1.8),
      snapOn: `${line('M3 21 22 3', '#333', 1.6)}${dot(9, 15, 2)}`,
      snapFace: `<path d="M3 10q5-9 18-6-4 5-3 10 2 5 4 6-5 2-8 0-2-4-6 0Q3 18 3 10z" fill="#98c0f8" stroke="#2048a8" stroke-width="1.500"/>${dot(13, 8, 2.5)}`,
      blueCube: cube('#b8dcff', '#58a0f8', '#2868d8'),
      flag: `<path d="M0 0h24v24H0z" fill="#7c98a4"/><path d="M4 6l7 2 9-3v10l-8 3-7-2z" fill="#98948c"/><path d="M5 7h3v3H5zM11 8h3v3h-3zM17 6h3v3h-3zM8 10h3v4H8zM14 10h3v4h-3zM11 14h3v3h-3zM17 12h3v3h-3z" fill="#646464"/>${line('M4 5l4 16', '#666')}`,
      fullscreen: `<path d="M4 5h16v14H4z" fill="#fff" stroke="#203060" stroke-width="1.500"/><path d="M7 8h10v8H7z" fill="#3888e0"/>${line('M1 6V1h5M18 1h5v5M1 18v5h5M18 23h5v-5', '#333', 1.8)}`,

      tree: `<g fill="#f8c820" stroke="#b08008" stroke-width=".8"><path d="M2 3l5-2 3 2v5l-5 2-3-2zM7 8l4-2 4 2v4l-4 2-4-2zM13 16l5-2 4 2v4l-5 2-4-1z"/></g>${line('M5 13v11M5 18h6', '#2028a8', 1.6)}${line('M14 12h9', '#333', 1.2)}`,
      part: `<path d="M1 3q5-3 9 0v7q-5 3-9 0z" fill="#a83890" stroke="#701858"/><ellipse cx="5.500" cy="3" rx="4" ry="1.500" fill="#f0b8e0"/>${line('M5 12v12M5 18h6', '#2028a8', 1.6)}${line('M13 9h9', '#333', 1.4)}<circle cx="16" cy="18" r="4.500" fill="none" stroke="#903878" stroke-width="1.500"/><circle cx="16" cy="18" r="1.500" fill="#903878"/>`,
      books: `<g stroke-width=".6"><path d="M1 7h6v15H1z" fill="#f09030" stroke="#a05008"/><path d="M7 7h6v15H7z" fill="#28b048" stroke="#086820"/><path d="M13 7h5v15h-5z" fill="#3090e8" stroke="#104898"/><path d="M18 7l6-5v14l-6 6z" fill="#1868c8"/></g><path d="M1 7l6-5h17l-6 5z" fill="#fff" stroke="#777" stroke-width=".6"/>${line('M7 7l6-5M13 7l6-5', '#287030')}${line('M3 8v13M9 8v13', '#fff', .8)}`,
      info: `<circle cx="8" cy="16" r="7.500" fill="#2870d8" stroke="#1850a8"/><path d="M7 10h3v2H7zM6 14h4v5h1v2H6v-2h1v-3H6z" fill="#fff"/>${line('M8 5q9 0 11 11M8 1q13-1 15 14', '#3060a8', 2)}`,
      web: `<path d="M4 1h12l5 5v17H4z" fill="#fff" stroke="#4868b8" stroke-width="1.500"/><path d="M16 1v5h5" fill="none" stroke="#4868b8"/><circle cx="12" cy="15" r="6" fill="#38a048" stroke="#287030"/><path d="M9 11l4-1 3 5-3 2-2 3-3-3z" fill="#a8d8f0"/><path d="M12 12l3 5h-5z" fill="#2868a8"/>`,
      clock: `<circle cx="12" cy="12" r="10.500" fill="#dce8f4" stroke="#50606c" stroke-width="1.600"/><circle cx="12" cy="12" r="8" fill="none" stroke="#8494a8" stroke-dasharray="1 3.200"/>${line('M12 4v8h7', '#111', 2)}`,
      roles: `<path d="M1 5q3-3 6-3v16q-5 1-5 4H1z" fill="#eee" stroke="#777"/><path d="M8 3h15v18H8z" fill="#fff" stroke="#888"/><circle cx="12" cy="7" r="2" fill="#3868d0"/><circle cx="12" cy="12" r="2" fill="#30a040"/><circle cx="12" cy="17" r="2" fill="#d03030"/>${line('M16 7h4M16 12h4M16 17h4', '#333', 1.4)}`,
      spectrum: `<path d="M1 1h9v22H1z" fill="url(#gr)"/>${line('M13 9l8 12', '#222', 4)}${line('M9 3l4 6', '#fff', 4)}`,
      wizard: `<path d="M2 2h9v16H2z" fill="#78acdc"/>${line('M1 5h11M1 9h11M1 13h11M1 17h11', '#2868b0', 1.6)}${line('M1 20h9', '#80a890', 3)}${line('M12 13q6-7 12-7M12 17q6-6 12-7', '#3858b0', 1.4)}${line('M13 9l8 12', '#222', 4)}${line('M11 4l3 5', '#fff', 3)}`,

      sketch: `<path d="M3 12h18l2 11H1z" fill="#fff" stroke="#182868" stroke-width="1.500"/><path d="M4 16h7v5H4zM14 15h4v6h-4z" fill="#dce8ff" stroke="#182868"/><path d="M11 15 19 3l4 2-7 12z" fill="#f0b030" stroke="#704010"/><path d="M6 0l1 4 4-2-2 4 4 2-4 1 1 4-4-2-3 3V9L0 8l3-3-2-4 4 2z" fill="#f8f030" stroke="#b0a010" stroke-width=".6"/>`,
      profile: `${line('M2 2v13q0 3 3 3h4q3 0 3-3V9q0-3 3-3h3q3 0 3 3v6', '#222', 1.6)}${dot(2, 12)}${dot(12, 13)}${dot(21, 12)}`,
      arcP: `${line('M2 4q15 2 17 17', '#703080', 1.6)}${dot(2, 4)}${dot(14, 10)}${dot(19, 21)}`,
      circle: `<circle cx="12" cy="12" r="9.500" fill="none" stroke="#333" stroke-width="1.600"/>`,
      fillet: `${line('M0 2h16M22 8v16', '#a8a8a8', 1.5)}${line('M10 2q12 0 12 10', '#c89090', 1.5)}`,
      chamfer: `${line('M0 2h14M22 11v13', '#a8a8a8', 1.5)}${line('M13 2l9 9', '#c89090', 1.5)}`,
      rectangle: `${line('M2 4h20v15H2z', '#333', 1.6)}${dot(2, 4)}${dot(22, 19)}`,
      plus: line('M12 4v16M3 12h18', '#222', 1.8),
      offsetG: `<g opacity=".45"><path d="M2 9l7-7h4q10 2 10 11 0 9-8 9H2z" fill="none" stroke="#333" stroke-width="1.300"/><path d="M6 11l5-5 2 3q6-1 6 4 0 5-6 5H6z" fill="none" stroke="#833" stroke-width="1.300"/></g>`,
      trimG: `${line('M4 1l15 20M1 15h13', '#aaa', 1.5)}<path d="M12 12l6-7 4 3-6 7z" fill="#b09880"/>`,
      extG: `${line('M2 8h12M4 1l9 17 2 5', '#aaa', 1.5)}<path d="M12 13l7-10 4 2-7 11z" fill="#a8a080"/>`,
      corner: line('M2 10h17M14 10v13', '#aaa', 1.5),
      dimG: `${line('M2 22 13 5M14 8h8', '#aaa', 2)}${line('M3 8h8', '#b09080', 1.5)}`,
      perp: line('M1 7h6M3 18l4-10M9 20h14M16 4v16', '#999', 1.5),
      mirG: `${line('M9 4H2v17h7M15 4h7v17h-7', '#999', 1.6)}${line('M12 1v22', '#c07070', 1.3)}`,
      animG: `<g fill="none" stroke="#9494a0" stroke-width="1.500"><path d="M2 8h14v6H2zM3 23 22 3"/><circle cx="17" cy="17" r="5"/><path d="M10 17h12"/></g>`,
      refG: `<path d="M2 2h10v9H2zM13 13h10v9H13z" fill="none" stroke="#888" stroke-width="1.500"/><path d="M1 15h7v7H1z" fill="#808080"/><path d="M11 13l8-9 4 2-8 9z" fill="#a8a880"/>${line('M5 11v4M8 18h5', '#888')}`,
    };

    const svg = (name, size) => `<svg width="${size}" height="${size}" viewBox="0 0 24 24" class="shrink-0" aria-hidden="true">${icons[name]}</svg>`;
    const grip = '<span class="w-2 shrink-0 pl-1 flex items-center"><span class="h-6 border-l-2 border-dotted border-[#aaa]"></span></span>';
    const drop = (pos) => `<button aria-label="更多" class="w-3 shrink-0 flex justify-center ${pos}"><svg width="5" height="3"><path d="M0 0h5L2.500 3z"/></svg></button>`;

    // "|" separator, "v" drop-down, "_" toolbar options, "*" marks a pressed tool
    function tools(list, size = 24, width = 'w-[30px]') {
      return list.split(' ').map(t => {
        if (t === '|') return '<span class="w-[6px] shrink-0 flex justify-center"><span class="w-[2px] border-l border-[#b4b4b4] bg-[#f4f4f4]"></span></span>';
        if (t === 'v') return drop('items-center');
        if (t === '_') return drop('items-end pb-2');
        const on = t[0] === '*';
        const id = on ? t.slice(1) : t;
        const box = size === 18 && on ? 'w-[23px] h-[22px]' : on ? 'w-[30px] h-[29px]' : width + ' h-full';
        return `<button aria-label="${id}" class="${box} shrink-0 self-center flex items-center justify-center ${on ? 'rounded-sm border border-[#555] bg-white' : ''}">${svg(id, size)}</button>`;
      }).join('');
    }
    const panel = (html) => `<div class="flex h-full pr-[2px] border-r border-b border-r-[#bbb] border-b-[#c4c4c4] border-t border-t-[#f2f2f2]">${html}</div>`;
    const put = (id, html) => document.getElementById(id).innerHTML = html;

    const menus = [['文件', 'F'], ['编辑', 'E'], ['视图', 'V'], ['插入', 'S'], ['格式', 'R'], ['工具', 'T'], ['装配', 'A'], ['信息', 'I'], ['分析', 'L'], ['首选项', 'P'], ['窗口', 'O'], ['GC工具箱', ''], ['帮助', 'H']];
    put('menu', menus.map(([name, key]) => {
      const label = name.replace('GC', '<span class="text-[11px]">GC</span>');
      return `<button class="whitespace-nowrap font-['Liberation_Mono','Noto_Sans_CJK_SC',monospace]">${label}${key && `<span class="text-[11px]">(<u>${key}</u>)</span>`}</button>`;
    }).join(''));

    put('row1',
      panel(grip + `<button class="w-[65px] shrink-0 flex items-center gap-1">${svg('nx', 25)}<span class="flex items-center gap-[3px] whitespace-nowrap">开始<svg width="5" height="3"><path d="M0 0h5L2.500 3z"/></svg></span></button>`
        + tools('new open save | cut copy paste del | undo redo')
        + '<button aria-label="更多工具" class="w-4 ml-[29px] shrink-0 flex flex-col items-center justify-between pt-[5px] pb-2"><svg width="8" height="6" fill="none" stroke="#000" stroke-width="1.500"><path d="m1 0 2 3-2 3M5 0l2 3-2 3"/></svg><svg width="5" height="3"><path d="M0 0h5L2.500 3z"/></svg></button>')
      + panel(grip + tools('fit v section v shaded v *zebra cyl grayCube v back v | show hide _'))
      + panel(grip + tools('layers wcs v | palette swap v | ruler angle _')));
    put('row2',
      panel(grip + tools('plane v extrude v revolve hole thread | boss v unite v mirror split v trim | blend v sheet draft _'))
      + panel(grip + tools('s1 v s2 v s3 s4 v s5 v s6 v _')));
    put('row3',
      panel(grip + tools('surf1 surf2 surf3 surf4 surf5 surf6 surf7 surf8 _'))
      + panel(grip + tools('line arc spline offset bridge project intersect _'))
      + panel(grip + tools('wrench trimC trimD trimE _')));
    put('row4', tools('find | snapBox v ret body rot turn | rect v | *snapAll *snapEnd *snapMid snapCtl snapInt *snapCen snapQuad *snapPt *snapOn snapFace | blueCube', 18, 'w-[22px]')
      + '<span class="ml-auto flex">' + tools('_') + '</span>');
    put('bottom', grip + tools('sketch flag')
      + '<span class="w-[50px] shrink-0 self-center text-[#a0a0a0] whitespace-nowrap">完成草图</span>'
      + tools('profile line arcP circle fillet chamfer rectangle spline plus offsetG v | trimG extG corner | dimG v | perp mirG animG v | refG _'));

    const tabs = [['tree', ''], ['part', 'on'], ['books', 'gap'], ['info', 'gap'], ['web', 'gap'], ['clock', ''], ['roles', ''], ['spectrum', ''], ['wizard', '']];
    put('tabs', tabs.map(([id, s]) =>
      `<button aria-label="${id}" class="flex items-center justify-center rounded-l-sm border border-r-0 border-[#777] ${s === 'on' ? 'w-7 h-[42px] bg-[#eee]' : 'w-[26px] h-10 bg-linear-to-r from-[#e2e2e2] to-[#cfcfcf]'} ${s === 'gap' ? 'mb-3' : 'mb-px'}">${svg(id, 23)}</button>`).join(''));
    put('scrollers', ['M2 1h8v2H2zM6 4l4 4H2z', 'M6 3l4 4H2z', 'M2 3h8L6 7z', 'M2 1h8L6 6zM2 7h8v2H2z'].map((d, i) =>
      `<button aria-label="滚动" class="w-4 h-[15px] mb-px bg-[#eee] border border-[#ccc] flex items-center justify-center"><svg width="12" height="10" fill="${i < 2 ? '#aaa' : '#333'}"><path d="${d}"/></svg></button>`).join(''));

    document.querySelectorAll('[data-icon]').forEach(el => el.innerHTML = svg(el.dataset.icon, el.dataset.size));
  </script>
</body>
</html>
